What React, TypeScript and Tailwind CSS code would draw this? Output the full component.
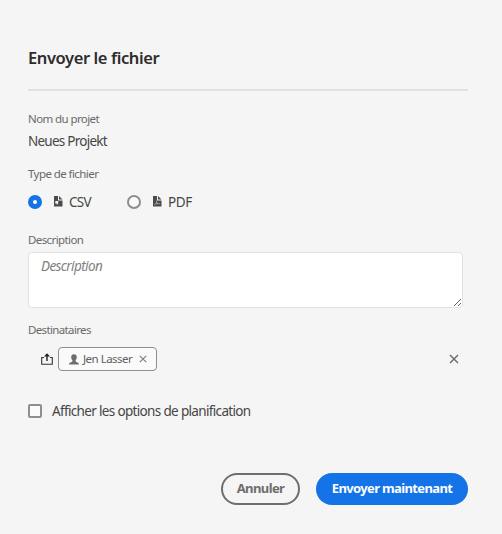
import React from 'react';

function Label({ children, className }: { children: React.ReactNode; className: string }) {
  return <div className={`h-4 whitespace-nowrap text-[11.5px] leading-4 text-[#6a6a6a] ${className}`}>{children}</div>;
}

function FileIcon({ children }: { children: React.ReactNode }) {
  return (
    <svg width="9" height="11" viewBox="0 0 9 11" className="relative -top-px shrink-0">
      <path d="M0 0h4v4.500h4.500V10.500H0z" fill="#4b4b4b" />
      <path d="M5 0l3.500 3.500H5z" fill="#4b4b4b" />
      {children}
    </svg>
  );
}

function Cross({ size, color, width }: { size: number; color: string; width: number }) {
  return (
    <svg width={size} height={size} viewBox="0 0 10 10" className="shrink-0">
      <path d="M1 1l8 8M9 1l-8 8" stroke={color} strokeWidth={width} fill="none" />
    </svg>
  );
}

export default function App() {
  return (
    <main className="flex h-[534px] w-[502px] flex-col bg-[#f5f5f5] pl-7 font-['Noto_Sans',sans-serif] text-[13px] text-[#464646]">
      <h1 className="mt-[46px] h-6 whitespace-nowrap text-[16.5px] leading-6 font-semibold tracking-[-0.4px] text-[#2c2c2c]">Envoyer le fichier</h1>
      <div className="mt-[19px] h-[2px] w-[440px] bg-[#e1e1e1]" />

      <Label className="mt-5 tracking-[-0.6px]">Nom du projet</Label>
      <div className="mt-[4px] h-5 text-[13.5px] leading-5 tracking-[-0.75px]">Neues Projekt</div>

      <Label className="mt-[15px] tracking-[-0.57px]">Type de fichier</Label>
      <div className="mt-[10px] flex h-5 items-center">
        <label className="flex w-[99px] items-center">
          <span className="flex size-[14px] items-center justify-center rounded-full bg-[#1473e6]">
            <span className="size-1 rounded-full bg-white" />
          </span>
          <span className="ml-3 flex w-[15px]">
            <FileIcon><path d="M1.300 5h2.900v2.600L2.800 9V7.600H1.300z" fill="#f5f5f5" /></FileIcon>
          </span>
          <span className="text-[13.5px] tracking-[-0.7px]">CSV</span>
        </label>
        <label className="flex items-center">
          <span className="size-[14px] rounded-full border-2 border-[#8e8e8e] bg-[#fafafa]" />
          <span className="ml-3 flex w-[15px]">
            <FileIcon><path d="M1.5 9l2-2.5L3.500 4.500M3.5 6.5L5 7.6l2 .2M2.5 8L5 7.5" stroke="#bdbdbd" strokeWidth=".7" fill="none" /></FileIcon>
          </span>
          <span className="text-[13.5px] tracking-[-0.4px]">PDF</span>
        </label>
      </div>

      <Label className="mt-5 tracking-[-0.6px]">Description</Label>
      <textarea
        placeholder="Description"
        className="mt-1 h-14 w-[435px] resize rounded border border-[#e1e1e1] bg-white px-3 py-[3px] text-[13.5px] leading-5 tracking-[-0.6px] outline-none placeholder:text-[#808080] placeholder:italic"
      />

      <Label className="mt-[14px] tracking-[-0.64px]">Destinataires</Label>
      <div className="mt-[9px] flex h-6 w-[435px] items-center pl-[13px]">
        <svg width="12" height="12" viewBox="0 0 12 12" className="shrink-0">
          <path d="M3 4.5H.7v6.8h10.6V4.5H9" stroke="#333" strokeWidth="1.1" fill="none" />
          <path d="M6 8V2" stroke="#222" strokeWidth="1.4" />
          <path d="M3 3.5L6 .2l3 3.3z" fill="#222" />
        </svg>
        <div className="ml-[5px] flex h-6 w-[99px] items-center rounded border border-[#8e8e8e] bg-[#fafafa] pl-[9px]">
          <svg width="12" height="11" viewBox="0 0 12 11" className="mr-[3px] shrink-0">
            <path d="M6 .3c1.8 0 2.8 1.3 2.8 3 0 1.2-.5 2.2-1.2 3v.8c0 .4.3.6.8.8 1.8.5 2.6 1 2.6 2.6H1C1 8.900 1.800 8.400 3.600 7.900c.5-.2.8-.4.8-.8v-.8c-.7-.8-1.200-1.800-1.200-3C3.200 1.600 4.200.3 6 .3z" fill="#6e6e6e" />
          </svg>
          <span className="w-[56px] text-[11.5px] whitespace-nowrap tracking-[-0.52px] text-[#606060]">Jen Lasser</span>
          <Cross size={8} color="#7a7a7a" width={1.3} />
        </div>
        <div className="mr-1 ml-auto flex">
          <Cross size={10} color="#6e6e6e" width={1.5} />
        </div>
      </div>

      <label className="mt-[30px] flex h-5 items-center gap-[10px]">
        <span className="size-[14px] rounded-[2px] border-2 border-[#8e8e8e] bg-[#fafafa]" />
        <span className="text-[13.5px] whitespace-nowrap tracking-[-0.66px]">Afficher les options de planification</span>
      </label>

      <div className="mt-[52px] flex h-8 w-[440px] justify-end gap-4">
        <button className="h-8 w-[79px] rounded-full border-2 border-[#6e6e6e] pb-[2px] text-[13px] leading-5 font-bold tracking-[-0.6px] whitespace-nowrap text-[#6e6e6e]">Annuler</button>
        <button className="h-8 w-[152px] rounded-full bg-[#1473e6] pb-[2px] text-[13px] leading-5 font-bold tracking-[-0.64px] whitespace-nowrap text-white">Envoyer maintenant</button>
      </div>
    </main>
  );
}
